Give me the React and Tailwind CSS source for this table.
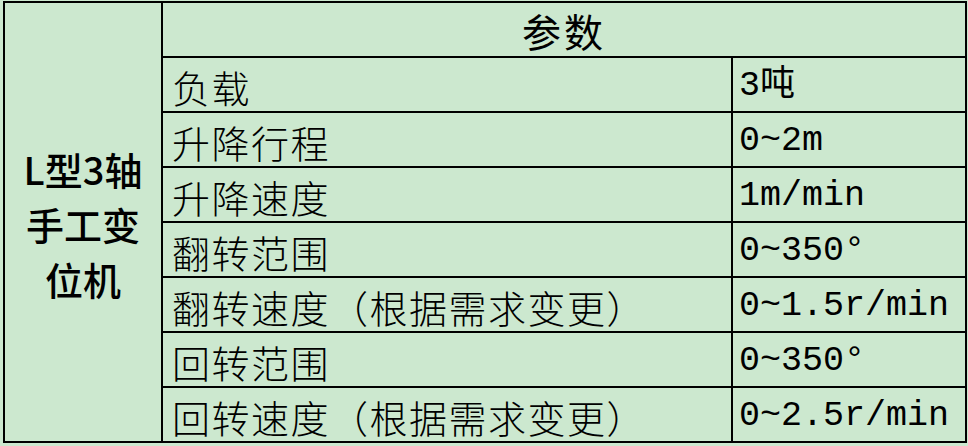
import React from "react";

const rows = [
  ["负载", "3吨"],
  ["升降行程", "0~2m"],
  ["升降速度", "1m/min"],
  ["翻转范围", "0~350°"],
  ["翻转速度（根据需求变更）", "0~1.5r/min"],
  ["回转范围", "0~350°"],
  ["回转速度（根据需求变更）", "0~2.5r/min"],
];

export default function App() {
  return (
    <div className="w-[968px] h-[446px] bg-[#cce8cf] pt-[1px] pl-[3px] overflow-hidden">
      <div className="inline-grid grid-cols-[156px_568px_232px] grid-rows-[repeat(8,53px)] gap-[2px] p-[2px] bg-black text-black">
        <div className="row-span-8 bg-[#cce8cf] flex flex-col items-center justify-center text-[38px] font-medium leading-[55px] pt-[2px] font-['Noto_Sans_CJK_SC',sans-serif]">
          <span>L型3轴</span>
          <span>手工变</span>
          <span>位机</span>
        </div>
        <div className="col-span-2 bg-[#cce8cf] flex items-center justify-center text-[39px] tracking-[3px] pt-[2px] font-['Noto_Sans_CJK_SC',sans-serif]">
          参数
        </div>
        {rows.map(([k, v]) => (
          <React.Fragment key={k}>
            <div className="bg-[#cce8cf] flex items-center pl-[9px] pt-[4px] text-[38px] font-light tracking-[1.5px] whitespace-nowrap font-['Noto_Sans_CJK_SC',sans-serif]">
              {k}
            </div>
            <div className="bg-[#cce8cf] flex items-center pl-[6px] pt-[4px] text-[35px] whitespace-nowrap font-['Liberation_Mono','Noto_Sans_CJK_SC',monospace]">
              {v}
            </div>
          </React.Fragment>
        ))}
      </div>
    </div>
  );
}
